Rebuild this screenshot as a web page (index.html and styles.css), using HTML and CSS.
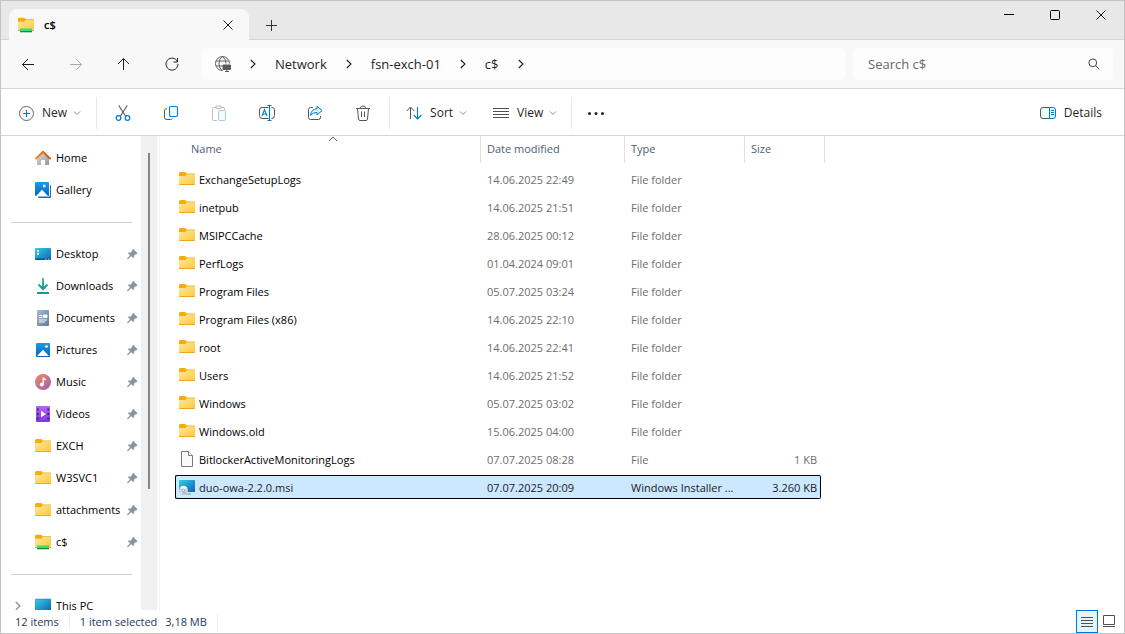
FILE: index.html
```
<!DOCTYPE html>
<html lang="en">
<head>
    <meta charset="UTF-8">
    <meta name="viewport" content="width=device-width, initial-scale=1.0">
    <title>c$</title>
    <link rel="stylesheet" href="styles.css">
</head>
<body>
    <!-- Icon sprite -->
    <svg class="sprite" aria-hidden="true">
        <defs>
            <linearGradient id="gFolder" x1="0" y1="0" x2="1" y2="1"><stop offset="0" stop-color="#ffe8a0"/><stop offset="1" stop-color="#fdc838"/></linearGradient>
            <linearGradient id="gScreen" x1="0" y1="0" x2="1" y2="1"><stop offset="0" stop-color="#35d0e4"/><stop offset="1" stop-color="#0f62b4"/></linearGradient>
            <linearGradient id="gPhoto" x1="0" y1="0" x2="0" y2="1"><stop offset="0" stop-color="#1b9de8"/><stop offset="1" stop-color="#0a61b5"/></linearGradient>
            <linearGradient id="gDown" x1="0" y1="0" x2="0" y2="1"><stop offset="0" stop-color="#35cf9f"/><stop offset="1" stop-color="#10948c"/></linearGradient>
            <linearGradient id="gDoc" x1="0" y1="0" x2="1" y2="1"><stop offset="0" stop-color="#a7bccf"/><stop offset="1" stop-color="#5c7c9e"/></linearGradient>
            <linearGradient id="gMusic" x1="0" y1="0" x2="1" y2="1"><stop offset="0" stop-color="#f08a5c"/><stop offset="1" stop-color="#a55bb0"/></linearGradient>
            <linearGradient id="gVideo" x1="0" y1="0" x2="0" y2="1"><stop offset="0" stop-color="#b264f4"/><stop offset="1" stop-color="#7d3ad8"/></linearGradient>
            <linearGradient id="gHome" x1="0" y1="0" x2="1" y2="1"><stop offset="0" stop-color="#dedede"/><stop offset="1" stop-color="#979797"/></linearGradient>
            <linearGradient id="gRoof" x1="0" y1="0" x2="1" y2="0"><stop offset="0" stop-color="#ef8b1c"/><stop offset="1" stop-color="#cd4b12"/></linearGradient>
        </defs>
        <symbol id="folder" viewBox="0 0 16 16">
            <path d="M0 2.500Q0 1 1.200 1H6l2 1.500h7.200q.8 0 .8 1V8H0z" fill="#f5ad0a"/>
            <path d="M0 5h6.200L8 3.200h7.200q.8 0 .8.800V13.200q0 .8-.8.8H.8q-.8 0-.8-.8z" fill="url(#gFolder)"/>
            <path d="M.3 13.500h15.400" stroke="#e8a91c"/>
        </symbol>
        <symbol id="share-folder" viewBox="0 0 16 16">
            <path d="M0 2.200Q0 .7 1.200.7H6l2 1.500h7.200q.8 0 .8 1V8H0z" fill="#f5ad0a"/>
            <path d="M0 4.700h6.200L8 3h7.200q.8 0 .8.800v8.400q0 .8-.8.800H.8q-.8 0-.8-.8z" fill="url(#gFolder)"/>
            <path d="M0 13.500h16" stroke="#a9b5a9"/>
            <path d="M2 11.500h12V15H2z" fill="#3bdf6c"/>
            <path d="M2 14h12v1.300H2z" fill="#128f3b"/>
        </symbol>
        <symbol id="home" viewBox="0 0 16 16">
            <path d="M2 7l6-5.500L14 7v7.400q0 .6-.6.6H10v-4.500q0-.5-.5-.5h-3q-.5 0-.5.5V15H2.600q-.6 0-.6-.6z" fill="url(#gHome)"/>
            <path d="M.9 8.600L8 1.700l7.100 6.900" fill="none" stroke="url(#gRoof)" stroke-width="1.900" stroke-linecap="round" stroke-linejoin="round"/>
        </symbol>
        <symbol id="gallery" viewBox="0 0 16 16">
            <path d="M3 3h12q1 0 1 1v11q0 1-1 1H4q-1 0-1-1z" fill="#1b6cb8"/>
            <path d="M2 14h12.500V2" fill="none" stroke="#fff"/>
            <rect width="14" height="14" rx="1" fill="url(#gPhoto)"/>
            <path d="M1 14l6-6.300L13 14z" fill="#fff"/>
            <path d="M8 2.700h2.500v2.600H8z" fill="#d9efff"/>
        </symbol>
        <symbol id="desktop" viewBox="0 0 16 16">
            <rect y="2" width="16" height="12" rx="1" fill="url(#gScreen)"/>
            <path d="M2 4h2v2H2zM2 7h2v2H2z" fill="#fff"/>
            <path d="M0 12.500h16V13q0 1-1 1H1q-1 0-1-1z" fill="#115389"/>
            <path d="M10 12.700h1.500v1H10zM13 12.700h1.500v1H13z" fill="#7fc8ea"/>
        </symbol>
        <symbol id="downloads" viewBox="0 0 16 16">
            <path d="M8 0v11M3.500 6.500L8 11l4.500-4.500" fill="none" stroke="url(#gDown)" stroke-width="2"/>
            <path d="M2 14h12v2H2z" fill="#159c8d"/>
        </symbol>
        <symbol id="documents" viewBox="0 0 16 16">
            <rect x="2" width="12" height="16" rx="1" fill="url(#gDoc)"/>
            <path d="M4 5.500h3.500M4 7.500h3.500M8.500 5h3.500v2.500H8.500zM4 10h8M4 12h6" fill="#fff" stroke="#fff"/>
        </symbol>
        <symbol id="pictures" viewBox="0 0 16 16">
            <rect x="1" y="1" width="14" height="14" rx="1" fill="url(#gPhoto)"/>
            <path d="M2 14l6-6.200L14 14z" fill="#fff"/>
            <circle cx="11.500" cy="4.500" r="1.300" fill="#fff"/>
        </symbol>
        <symbol id="music" viewBox="0 0 16 16">
            <circle cx="8" cy="8" r="8" fill="url(#gMusic)"/>
            <circle cx="6.800" cy="10.500" r="2" fill="#fff"/>
            <path d="M8.200 10.500V3.500q.8 2 3 2.200" fill="none" stroke="#fff" stroke-width="1.300"/>
        </symbol>
        <symbol id="videos" viewBox="0 0 16 16">
            <rect x="1" width="14" height="16" rx="1" fill="url(#gVideo)"/>
            <path d="M6 4.800L11 8l-5 3.200z" fill="#fff"/>
            <path d="M2 2.500h1.700v2H2zM2 7h1.700v2H2zM2 11.500h1.700v2H2zM12.300 2.500H14v2h-1.700zM12.300 7H14v2h-1.700zM12.300 11.500H14v2h-1.700z" fill="#42207c"/>
        </symbol>
        <symbol id="pc" viewBox="0 0 16 16">
            <rect y="1" width="16" height="12" rx="1" fill="url(#gScreen)" stroke="#1577a8" stroke-width=".5"/>
            <path d="M4 15h8" stroke="#777"/>
        </symbol>
        <symbol id="file" viewBox="0 0 16 16">
            <path d="M2.500.5h7l4 4v11h-11z" fill="#fafafa" stroke="#7a7a7a"/>
            <path d="M9.500.5v4h4" fill="#fff" stroke="#7a7a7a"/>
        </symbol>
        <symbol id="msi" viewBox="0 0 16 16">
            <rect y="1" width="16" height="12" rx=".5" fill="url(#gScreen)"/>
            <path d="M6 15h6" stroke="#9a9a9a"/>
            <circle cx="4.500" cy="11.300" r="4.400" fill="#d5dade"/>
            <path d="M4.500 11.300L1.500 8q4-2.500 6.500.5z" fill="#fff"/>
            <path d="M4.500 11.300L8 14q-2 2-5 1.500z" fill="#b4bec6"/>
            <circle cx="4.500" cy="11.300" r="1.200" fill="#fff" stroke="#5a9cc0" stroke-width=".8"/>
        </symbol>
        <symbol id="pin" viewBox="0 0 12 12">
            <path d="M6.700.8L11.200 5.300 10 6 9.300 5.900 7.300 8 7 10.300 4.500 8 .8 11.400.4 11 3.700 7.300 1.400 5l2.500-.3L6 2.700 5.900 2z" fill="#8796a1" stroke="#8796a1" stroke-width=".8"/>
        </symbol>
        <symbol id="chev-right" viewBox="0 0 6 10"><path d="M.8 1L5 5 .8 9" fill="none" stroke="currentColor" stroke-width="1.100"/></symbol>
        <symbol id="chev-down" viewBox="0 0 8 6"><path d="M1 1.500l3 3 3-3" fill="none" stroke="#919191"/></symbol>
        <symbol id="left" viewBox="0 0 16 16"><path d="M14 8.500H2.500M8 3L2.500 8.500 8 14" fill="none" stroke="currentColor"/></symbol>
        <symbol id="close" viewBox="0 0 12 12"><path d="M1.500 1.500l9 9M10.500 1.500l-9 9" fill="none" stroke="currentColor" stroke-width=".9"/></symbol>
        <symbol id="refresh" viewBox="0 0 16 16"><path d="M13.400 5.500A6 6 0 1 0 14 8M13.500 2v4h-4" fill="none" stroke="currentColor"/></symbol>
        <symbol id="globe" viewBox="0 0 16 16">
            <path d="M7.500 14.500A7 7 0 1 1 14.500 7.500M7.500.5Q4 3 4 7.500T7 14.500M7.500.5Q11 3 11 7.500M1.200 5h12.600M1.200 10H8" fill="none" stroke="#606060"/>
            <rect x="7.500" y="8.500" width="8.500" height="5.500" rx="1" fill="#5a5a5a"/>
            <path d="M10 15.500h4M11.800 14v1.500" stroke="#5a5a5a"/>
        </symbol>
        <symbol id="cut" viewBox="0 0 16 16">
            <path d="M3.800.5L10.500 11M12.200.5L5.500 11" fill="none" stroke="#555" stroke-width="1.100"/>
            <circle cx="3.500" cy="13" r="2.300" fill="none" stroke="#0078d4" stroke-width="1.200"/>
            <circle cx="12.500" cy="13" r="2.300" fill="none" stroke="#0078d4" stroke-width="1.200"/>
        </symbol>
        <symbol id="copy" viewBox="0 0 16 16">
            <path d="M4 3.500q-2.500 0-2.500 2.500v6q0 2.500 2.500 2.500h3.500q1.500 0 2-1" fill="none" stroke="#555"/>
            <rect x="6.500" y="1.500" width="8" height="10" rx="1.500" fill="#f7fbff" stroke="#0078d4" stroke-width="1.100"/>
        </symbol>
        <symbol id="paste" viewBox="0 0 16 16">
            <path d="M5 2.500H2.500q-1 0-1 1v11q0 1 1 1H6M10 2.500h2.500q1 0 1 1V5" fill="none" stroke="#bdbdbd"/>
            <path d="M5 1h5v2.500H5z" fill="#fff" stroke="#bdbdbd"/>
            <rect x="7.500" y="5.500" width="7" height="10" rx="1" fill="#f5fafe" stroke="#a3cdef"/>
        </symbol>
        <symbol id="rename" viewBox="0 0 16 16">
            <path d="M9.500 2.500H3q-2.500 0-2.500 2.500v5.500Q.5 13.500 3 13.500h6.500M12.500 2.500h.5q2.500 0 2.500 2.500v5.500q0 3-2.500 3h-.5" fill="none" stroke="#555"/>
            <path d="M10.500 .5v15M8.500 .5h4M8.500 15.500h4M3 11l2.500-6.500L8 11M3.800 9h3.400" fill="none" stroke="#0078d4" stroke-width="1.100"/>
        </symbol>
        <symbol id="share" viewBox="0 0 16 16">
            <path d="M6 2.500H3.500q-2 0-2 2v8q0 2 2 2h8q2 0 2-2V11" fill="none" stroke="#555"/>
            <path d="M10 1.200L15 5.500 10 10V7.500Q6 7.200 3.500 10.500 4 4.200 10 3.700z" fill="#e5f3fd" stroke="#0078d4" stroke-linejoin="round"/>
        </symbol>
        <symbol id="trash" viewBox="0 0 16 16">
            <path d="M1 3.500h14M5.500 3.500V3q0-2 2.500-2t2.500 2v.5M2.500 3.500l1 10.500q.2 1.500 1.500 1.500h6q1.300 0 1.500-1.500l1-10.500M6.500 6.500v5.500M9.500 6.500v5.500" fill="none" stroke="#555"/>
        </symbol>
        <symbol id="sort" viewBox="0 0 16 16">
            <path d="M4.500 14V2.500M.7 6L4.500 2l3.800 4" fill="none" stroke="#555"/>
            <path d="M11.500 2v11.500M7.700 10l3.800 4 3.800-4" fill="none" stroke="#0078d4" stroke-width="1.100"/>
        </symbol>
        <symbol id="lines" viewBox="0 0 16 16"><path d="M0 3.500h16M0 6.500h16M0 9.500h16M0 12.500h16" stroke="#505050"/></symbol>
        <symbol id="details" viewBox="0 0 16 16">
            <path d="M9.500 2.500H3Q.5 2.500.5 5v6q0 2.500 2.500 2.500h6.500" fill="#fafafa" stroke="#555"/>
            <path d="M9.500 2.500H13q2.500 0 2.500 2.500v6q0 2.500-2.500 2.500H9.500z" fill="#e9f5fe" stroke="#0078d4"/>
            <path d="M11 5.500h3M11 7.500h3M11 9.500h3" stroke="#0078d4"/>
        </symbol>
        <symbol id="new" viewBox="0 0 16 16">
            <circle cx="8.500" cy="8.500" r="7" fill="#fcfcfc" stroke="#666"/>
            <path d="M8.500 5v7M5 8.500h7" stroke="#0078d4" stroke-width="1.100"/>
        </symbol>
        <symbol id="search" viewBox="0 0 12 12"><path d="M7.500 7.500L11.300 11.300" stroke="#444"/><circle cx="4.800" cy="4.800" r="3.900" fill="none" stroke="#444"/></symbol>
    </svg>

    <div class="window">
        <header class="tab-strip">
            <div class="tab">
                <svg class="icon"><use href="#share-folder"/></svg>
                <span class="tab-title">c$</span>
                <button class="tab-close" aria-label="Close tab"><svg class="icon-s"><use href="#close"/></svg></button>
            </div>
            <button class="tab-new" aria-label="New tab"><svg class="icon-s" viewBox="0 0 12 12"><path d="M6.500 1v11M1 6.500h11" stroke="#333"/></svg></button>
            <div class="window-buttons">
                <button aria-label="Minimize"><svg class="icon-s" viewBox="0 0 12 12"><path d="M1 5.500h10" stroke="#000"/></svg></button>
                <button aria-label="Maximize"><svg class="icon-s" viewBox="0 0 12 12"><rect x="1.500" y="1.500" width="9" height="9" rx="1" fill="none" stroke="#000"/></svg></button>
                <button aria-label="Close"><svg class="icon-s"><use href="#close"/></svg></button>
            </div>
        </header>

        <nav class="nav-bar" aria-label="Navigation">
            <div class="nav-buttons">
                <button aria-label="Back"><svg class="icon"><use href="#left"/></svg></button>
                <button aria-label="Forward" disabled><svg class="icon flip"><use href="#left"/></svg></button>
                <button aria-label="Up"><svg class="icon up"><use href="#left"/></svg></button>
                <button aria-label="Refresh"><svg class="icon"><use href="#refresh"/></svg></button>
            </div>
            <div class="address">
                <svg class="icon"><use href="#globe"/></svg>
                <svg class="chev"><use href="#chev-right"/></svg>
                <a href="#network">Network</a>
                <svg class="chev"><use href="#chev-right"/></svg>
                <a href="#host">fsn-exch-01</a>
                <svg class="chev"><use href="#chev-right"/></svg>
                <a href="#share">c$</a>
                <svg class="chev"><use href="#chev-right"/></svg>
            </div>
            <div class="search">
                <input type="text" placeholder="Search c$" aria-label="Search c$">
                <svg class="icon-s"><use href="#search"/></svg>
            </div>
        </nav>

        <div class="toolbar">
            <button class="tool"><svg class="icon"><use href="#new"/></svg>New<svg class="drop"><use href="#chev-down"/></svg></button>
            <div class="tool-group">
                <button aria-label="Cut"><svg class="icon"><use href="#cut"/></svg></button>
                <button aria-label="Copy"><svg class="icon"><use href="#copy"/></svg></button>
                <button aria-label="Paste" disabled><svg class="icon"><use href="#paste"/></svg></button>
                <button aria-label="Rename"><svg class="icon"><use href="#rename"/></svg></button>
                <button aria-label="Share"><svg class="icon"><use href="#share"/></svg></button>
                <button aria-label="Delete"><svg class="icon"><use href="#trash"/></svg></button>
            </div>
            <div class="tool-menus">
                <button class="tool"><svg class="icon"><use href="#sort"/></svg>Sort<svg class="drop"><use href="#chev-down"/></svg></button>
                <button class="tool"><svg class="icon"><use href="#lines"/></svg>View<svg class="drop"><use href="#chev-down"/></svg></button>
            </div>
            <button class="more" aria-label="See more"><svg class="icon" viewBox="0 0 16 16"><circle cx="1.500" cy="8.500" r="1.500" fill="#222"/><circle cx="8" cy="8.500" r="1.500" fill="#222"/><circle cx="14.500" cy="8.500" r="1.500" fill="#222"/></svg></button>
            <button class="tool tool-details"><svg class="icon"><use href="#details"/></svg>Details</button>
        </div>

        <main class="content">
            <aside class="sidebar">
                <a class="side-item" href="#home"><svg class="icon"><use href="#home"/></svg>Home</a>
                <a class="side-item" href="#gallery"><svg class="icon"><use href="#gallery"/></svg>Gallery</a>
                <hr>
                <a class="side-item" href="#desktop"><svg class="icon"><use href="#desktop"/></svg>Desktop<svg class="pin"><use href="#pin"/></svg></a>
                <a class="side-item" href="#downloads"><svg class="icon"><use href="#downloads"/></svg>Downloads<svg class="pin"><use href="#pin"/></svg></a>
                <a class="side-item" href="#documents"><svg class="icon"><use href="#documents"/></svg>Documents<svg class="pin"><use href="#pin"/></svg></a>
                <a class="side-item" href="#pictures"><svg class="icon"><use href="#pictures"/></svg>Pictures<svg class="pin"><use href="#pin"/></svg></a>
                <a class="side-item" href="#music"><svg class="icon"><use href="#music"/></svg>Music<svg class="pin"><use href="#pin"/></svg></a>
                <a class="side-item" href="#videos"><svg class="icon"><use href="#videos"/></svg>Videos<svg class="pin"><use href="#pin"/></svg></a>
                <a class="side-item" href="#exch"><svg class="icon"><use href="#folder"/></svg>EXCH<svg class="pin"><use href="#pin"/></svg></a>
                <a class="side-item" href="#w3svc1"><svg class="icon"><use href="#folder"/></svg>W3SVC1<svg class="pin"><use href="#pin"/></svg></a>
                <a class="side-item" href="#attachments"><svg class="icon"><use href="#folder"/></svg>attachments<svg class="pin"><use href="#pin"/></svg></a>
                <a class="side-item" href="#c"><svg class="icon"><use href="#share-folder"/></svg>c$<svg class="pin"><use href="#pin"/></svg></a>
                <hr>
                <a class="side-item expandable" href="#pc"><svg class="chev"><use href="#chev-right"/></svg><svg class="icon"><use href="#pc"/></svg>This PC</a>
            </aside>
            <div class="scrollbar"><div class="thumb"></div></div>

            <section class="files">
                <svg class="sort-mark" viewBox="0 0 10 6"><path d="M1 5l4-4 4 4" fill="none" stroke="#666"/></svg>
                <table>
                    <colgroup>
                        <col class="col-name">
                        <col class="col-date">
                        <col class="col-type">
                        <col class="col-size">
                        <col class="col-end">
                    </colgroup>
                    <thead>
                        <tr><th>Name</th><th>Date modified</th><th>Type</th><th colspan="2">Size</th></tr>
                    </thead>
                    <tbody>
                        <tr><td><div class="name"><svg class="icon"><use href="#folder"/></svg>ExchangeSetupLogs</div></td><td>14.06.2025 22:49</td><td>File folder</td><td></td></tr>
                        <tr><td><div class="name"><svg class="icon"><use href="#folder"/></svg>inetpub</div></td><td>14.06.2025 21:51</td><td>File folder</td><td></td></tr>
                        <tr><td><div class="name"><svg class="icon"><use href="#folder"/></svg>MSIPCCache</div></td><td>28.06.2025 00:12</td><td>File folder</td><td></td></tr>
                        <tr><td><div class="name"><svg class="icon"><use href="#folder"/></svg>PerfLogs</div></td><td>01.04.2024 09:01</td><td>File folder</td><td></td></tr>
                        <tr><td><div class="name"><svg class="icon"><use href="#folder"/></svg>Program Files</div></td><td>05.07.2025 03:24</td><td>File folder</td><td></td></tr>
                        <tr><td><div class="name"><svg class="icon"><use href="#folder"/></svg>Program Files (x86)</div></td><td>14.06.2025 22:10</td><td>File folder</td><td></td></tr>
                        <tr><td><div class="name"><svg class="icon"><use href="#folder"/></svg>root</div></td><td>14.06.2025 22:41</td><td>File folder</td><td></td></tr>
                        <tr><td><div class="name"><svg class="icon"><use href="#folder"/></svg>Users</div></td><td>14.06.2025 21:52</td><td>File folder</td><td></td></tr>
                        <tr><td><div class="name"><svg class="icon"><use href="#folder"/></svg>Windows</div></td><td>05.07.2025 03:02</td><td>File folder</td><td></td></tr>
                        <tr><td><div class="name"><svg class="icon"><use href="#folder"/></svg>Windows.old</div></td><td>15.06.2025 04:00</td><td>File folder</td><td></td></tr>
                        <tr><td><div class="name"><svg class="icon"><use href="#file"/></svg>BitlockerActiveMonitoringLogs</div></td><td>07.07.2025 08:28</td><td>File</td><td>1 KB</td></tr>
                        <tr class="selected"><td><div class="name"><svg class="icon"><use href="#msi"/></svg>duo-owa-2.2.0.msi</div></td><td>07.07.2025 20:09</td><td>Windows Installer ...</td><td>3.260 KB</td></tr>
                    </tbody>
                </table>
            </section>
        </main>

        <footer class="status-bar">
            <span class="status-count">12 items</span>
            <span class="status-selection"><span>1 item selected</span><span>3,18 MB</span></span>
            <div class="view-switch">
                <button class="active" aria-label="Details view"><svg class="icon-v" viewBox="0 0 14 14"><path d="M1 2.500h12M1 5.500h12M1 8.500h12M1 11.500h12" stroke="#505050"/></svg></button>
                <button aria-label="Large icons view"><svg class="icon-v" viewBox="0 0 14 14"><path d="M1.500.5h11v9h-11zM1 11.500h12" fill="none" stroke="#505050"/></svg></button>
            </div>
        </footer>
    </div>
</body>
</html>
```
FILE: styles.css
```
* {
    box-sizing: border-box;
}
body {
    margin: 0;
    font-family: 'Segoe UI', 'Open Sans', 'Noto Sans', sans-serif;
    font-size: 11px;
    line-height: 16px;
    color: #000;
}
button {
    display: flex;
    align-items: center;
    justify-content: center;
    padding: 0;
    border: none;
    background: none;
    font: inherit;
    color: inherit;
}
a {
    color: inherit;
    text-decoration: none;
}
svg {
    display: block;
    flex: none;
}
.sprite {
    position: absolute;
    width: 0;
    height: 0;
}
.icon {
    width: 16px;
    height: 16px;
}
.icon-s {
    width: 12px;
    height: 12px;
}
.icon-v {
    width: 14px;
    height: 14px;
}
.chev {
    width: 6px;
    height: 10px;
}
.drop {
    width: 8px;
    height: 6px;
    margin-left: -2px;
}
.flip {
    transform: scaleX(-1);
}
.up {
    transform: rotate(90deg);
}
.window {
    display: flex;
    flex-direction: column;
    height: 100vh;
    border: 1px solid #c3c3c3;
    background: #fff;
}

/* Tabs */
.tab-strip {
    display: flex;
    height: 39px;
    padding-left: 8px;
    background: #e8e8e8;
    box-shadow: inset 0 -1px #d6d6d6;
}
.tab {
    display: flex;
    align-items: center;
    width: 240px;
    margin-top: 8px;
    padding: 0 9px;
    gap: 10px;
    border-radius: 8px 8px 0 0;
    background: #f8f8f8;
}
.tab-title {
    flex: 1;
    font-weight: 600;
}
.tab-close {
    width: 24px;
    height: 24px;
}
.tab-new {
    width: 32px;
    margin: 8px 0 0 6px;
}
.window-buttons {
    display: flex;
    height: 28px;
    margin-left: auto;
}
.window-buttons button {
    width: 46px;
}

/* Navigation */
.nav-bar {
    display: flex;
    align-items: center;
    height: 49px;
    padding: 0 11px 0 7px;
    gap: 8px;
    border-bottom: 1px solid #d6d6d6;
    background: #f8f8f8;
    font-size: 13px;
    color: #1f1f1f;
}
.nav-buttons {
    display: flex;
    gap: 8px;
}
.nav-buttons button {
    width: 40px;
    height: 32px;
}
.nav-buttons button:disabled {
    color: #aaa;
}
.address,
.search {
    display: flex;
    align-items: center;
    height: 32px;
    border-radius: 5px;
    background: #fdfdfd;
}
.address {
    flex: 1;
    margin-left: 2px;
    padding-left: 13px;
    gap: 19px;
}
.search {
    width: 260px;
    padding: 0 13px 0 15px;
}
.search input {
    flex: 1;
    min-width: 0;
    padding: 0;
    border: none;
    outline: none;
    background: none;
    font: inherit;
}
.search input::placeholder {
    color: #666;
}

/* Commands */
.toolbar {
    display: flex;
    align-items: center;
    height: 47px;
    padding: 2px 22px 0 17px;
    border-bottom: 1px solid #d6d6d6;
    font-size: 12px;
    color: #1f1f1f;
}
.tool {
    height: 32px;
    gap: 8px;
}
.tool-group,
.tool-menus {
    display: flex;
    border-left: 1px solid #e8e8e8;
    height: 32px;
}
.tool-group {
    gap: 8px;
    margin-left: 15px;
    padding: 0 6px;
}
.tool-group button {
    width: 40px;
}
.tool-menus {
    padding: 0 14px 0 16px;
    gap: 26px;
    border-right: 1px solid #e8e8e8;
}
.more {
    width: 48px;
    height: 32px;
}
.tool-details {
    margin-left: auto;
}

/* Sidebar */
.content {
    display: flex;
    flex: 1;
    min-height: 0;
}
.sidebar {
    width: 140px;
    padding-top: 6px;
    overflow: hidden;
}
.side-item {
    display: flex;
    align-items: center;
    height: 32px;
    padding: 0 3px 0 34px;
    gap: 5px;
    white-space: nowrap;
}
.expandable {
    padding-left: 14px;
}
.expandable .chev {
    margin-right: 9px;
    color: #888;
}
.pin {
    width: 11px;
    height: 12px;
    margin-left: auto;
}
hr {
    margin: 16px 9px 15px 10px;
    border: none;
    border-top: 1px solid #d0d0d0;
}
.scrollbar {
    width: 16px;
    padding: 17px 7px 0;
    background: #f0f0f0;
}
.thumb {
    width: 2px;
    height: 336px;
    background: #858585;
}

/* File list */
.files {
    position: relative;
    flex: 1;
    margin-left: 2px;
    padding-left: 15px;
    border-left: 1px solid #f3f3f3;
}
.sort-mark {
    position: absolute;
    left: 168px;
    top: 0;
    width: 10px;
    height: 6px;
}
table {
    width: 650px;
    margin-top: -4px;
    table-layout: fixed;
    border-spacing: 0 4px;
}
.col-name {
    width: 306px;
}
.col-date {
    width: 144px;
}
.col-type {
    width: 120px;
}
.col-size {
    width: 76px;
}
.col-end {
    width: 4px;
}
th,
td {
    padding: 0 6px;
    text-align: left;
    white-space: nowrap;
}
th {
    height: 27px;
    padding-bottom: 2px;
    border-right: 1px solid #e2e2e2;
    font-weight: 400;
    color: #4c607a;
}
th:first-child {
    padding-left: 16px;
}
td {
    height: 24px;
    padding-top: 2px;
    border: 1px solid transparent;
    border-width: 1px 0;
    color: #6d6d6d;
}
td:first-child {
    padding-left: 3px;
    border-left-width: 1px;
    color: #000;
}
td:nth-child(4) {
    padding-right: 3px;
    border-right-width: 1px;
    text-align: right;
}
.name {
    display: flex;
    align-items: center;
    height: 16px;
    gap: 4px;
}
.name .icon {
    margin-bottom: 2px;
}
.selected td {
    border-color: #000;
    background: #cce8ff;
    color: #1a1a1a;
}
.selected td:first-child {
    border-radius: 2px 0 0 2px;
}
.selected td:nth-child(4) {
    border-radius: 0 2px 2px 0;
}

/* Status bar */
.status-bar {
    display: flex;
    align-items: center;
    height: 23px;
    padding-left: 14px;
    color: #1e395b;
}
.status-count {
    padding-right: 10px;
    border-right: 1px solid #f0f0f0;
}
.status-selection {
    display: flex;
    gap: 8px;
    padding: 0 10px;
    border-right: 1px solid #f0f0f0;
}
.view-switch {
    display: flex;
    margin-left: auto;
    padding-right: 4px;
}
.view-switch button {
    width: 22px;
    height: 23px;
}
.view-switch .active {
    border: 1px solid #0078d7;
    background: #e5f3fb;
}
```
